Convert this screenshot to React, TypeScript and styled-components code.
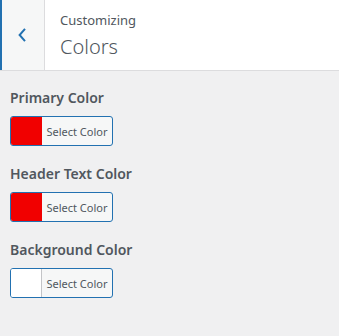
import React from 'react';
import styled, { createGlobalStyle } from 'styled-components';

const GlobalStyle = createGlobalStyle`
  html, body {
    margin: 0;
    padding: 0;
    background: #f0f0f1;
  }
  body {
    font-family: "Noto Sans", "Open Sans", sans-serif;
    color: #50575e;
  }
`;

const Panel = styled.div`
  width: 339px;
  height: 336px;
  background: #f0f0f1;
  overflow: hidden;
`;

const Header = styled.header`
  display: flex;
  height: 70px;
  background: #fff;
  border-bottom: 1px solid #dcdcde;
`;

const BackButton = styled.button`
  display: flex;
  align-items: center;
  justify-content: center;
  width: 45px;
  height: 100%;
  padding: 0 2px 0 0;
  margin: 0;
  background: #f6f7f7;
  border: none;
  border-left: 2px solid #2271b1;
  border-right: 1px solid #dcdcde;
  color: #2271b1;
  cursor: pointer;
`;

const TitleBlock = styled.div`
  display: flex;
  flex-direction: column;
  padding: 11px 0 0 15px;
`;

const Eyebrow = styled.span`
  font-size: 13px;
  line-height: 18px;
  color: #50575e;
`;

const Title = styled.h1`
  margin: 6px 0 0;
  font-size: 20px;
  font-weight: 300;
  line-height: 24px;
  color: #50575e;
`;

const Body = styled.div`
  display: flex;
  flex-direction: column;
  gap: 16px;
  padding: 15px 10px;
`;

const Control = styled.div`
  display: flex;
  flex-direction: column;
  gap: 6px;
`;

const Label = styled.label`
  font-size: 14px;
  font-weight: 600;
  line-height: 24px;
  color: #50575e;
`;

const PickerButton = styled.button`
  display: flex;
  align-items: stretch;
  width: 103px;
  height: 30px;
  padding: 0;
  margin: 0;
  border: 1px solid #2271b1;
  border-radius: 3px;
  background: #f6f7f7;
  overflow: hidden;
  cursor: pointer;
`;

const Swatch = styled.span<{ $color: string }>`
  width: 30px;
  background: ${({ $color }) => $color};
  border-right: 1px solid ${({ $color }) => ($color === '#ffffff' ? '#c3c4c7' : $color)};
`;

const PickerText = styled.span`
  flex: 1;
  display: flex;
  align-items: center;
  justify-content: center;
  font-family: "Noto Sans", "Open Sans", sans-serif;
  font-size: 11px;
  color: #50575e;
`;

const controls = [
  { label: 'Primary Color', color: '#f10000' },
  { label: 'Header Text Color', color: '#f10000' },
  { label: 'Background Color', color: '#ffffff' },
];

function ChevronLeft() {
  return (
    <svg width="10" height="16" viewBox="0 0 10 16" fill="none">
      <path d="M8 1.8L2.6 8 8 14.2" stroke="currentColor" strokeWidth="2" />
    </svg>
  );
}

function App() {
  return (
    <Panel>
      <GlobalStyle />
      <Header>
        <BackButton type="button" aria-label="Back">
          <ChevronLeft />
        </BackButton>
        <TitleBlock>
          <Eyebrow>Customizing</Eyebrow>
          <Title>Colors</Title>
        </TitleBlock>
      </Header>
      <Body>
        {controls.map((c) => (
          <Control key={c.label}>
            <Label>{c.label}</Label>
            <PickerButton type="button">
              <Swatch $color={c.color} />
              <PickerText>Select Color</PickerText>
            </PickerButton>
          </Control>
        ))}
      </Body>
    </Panel>
  );
}

export default App;
